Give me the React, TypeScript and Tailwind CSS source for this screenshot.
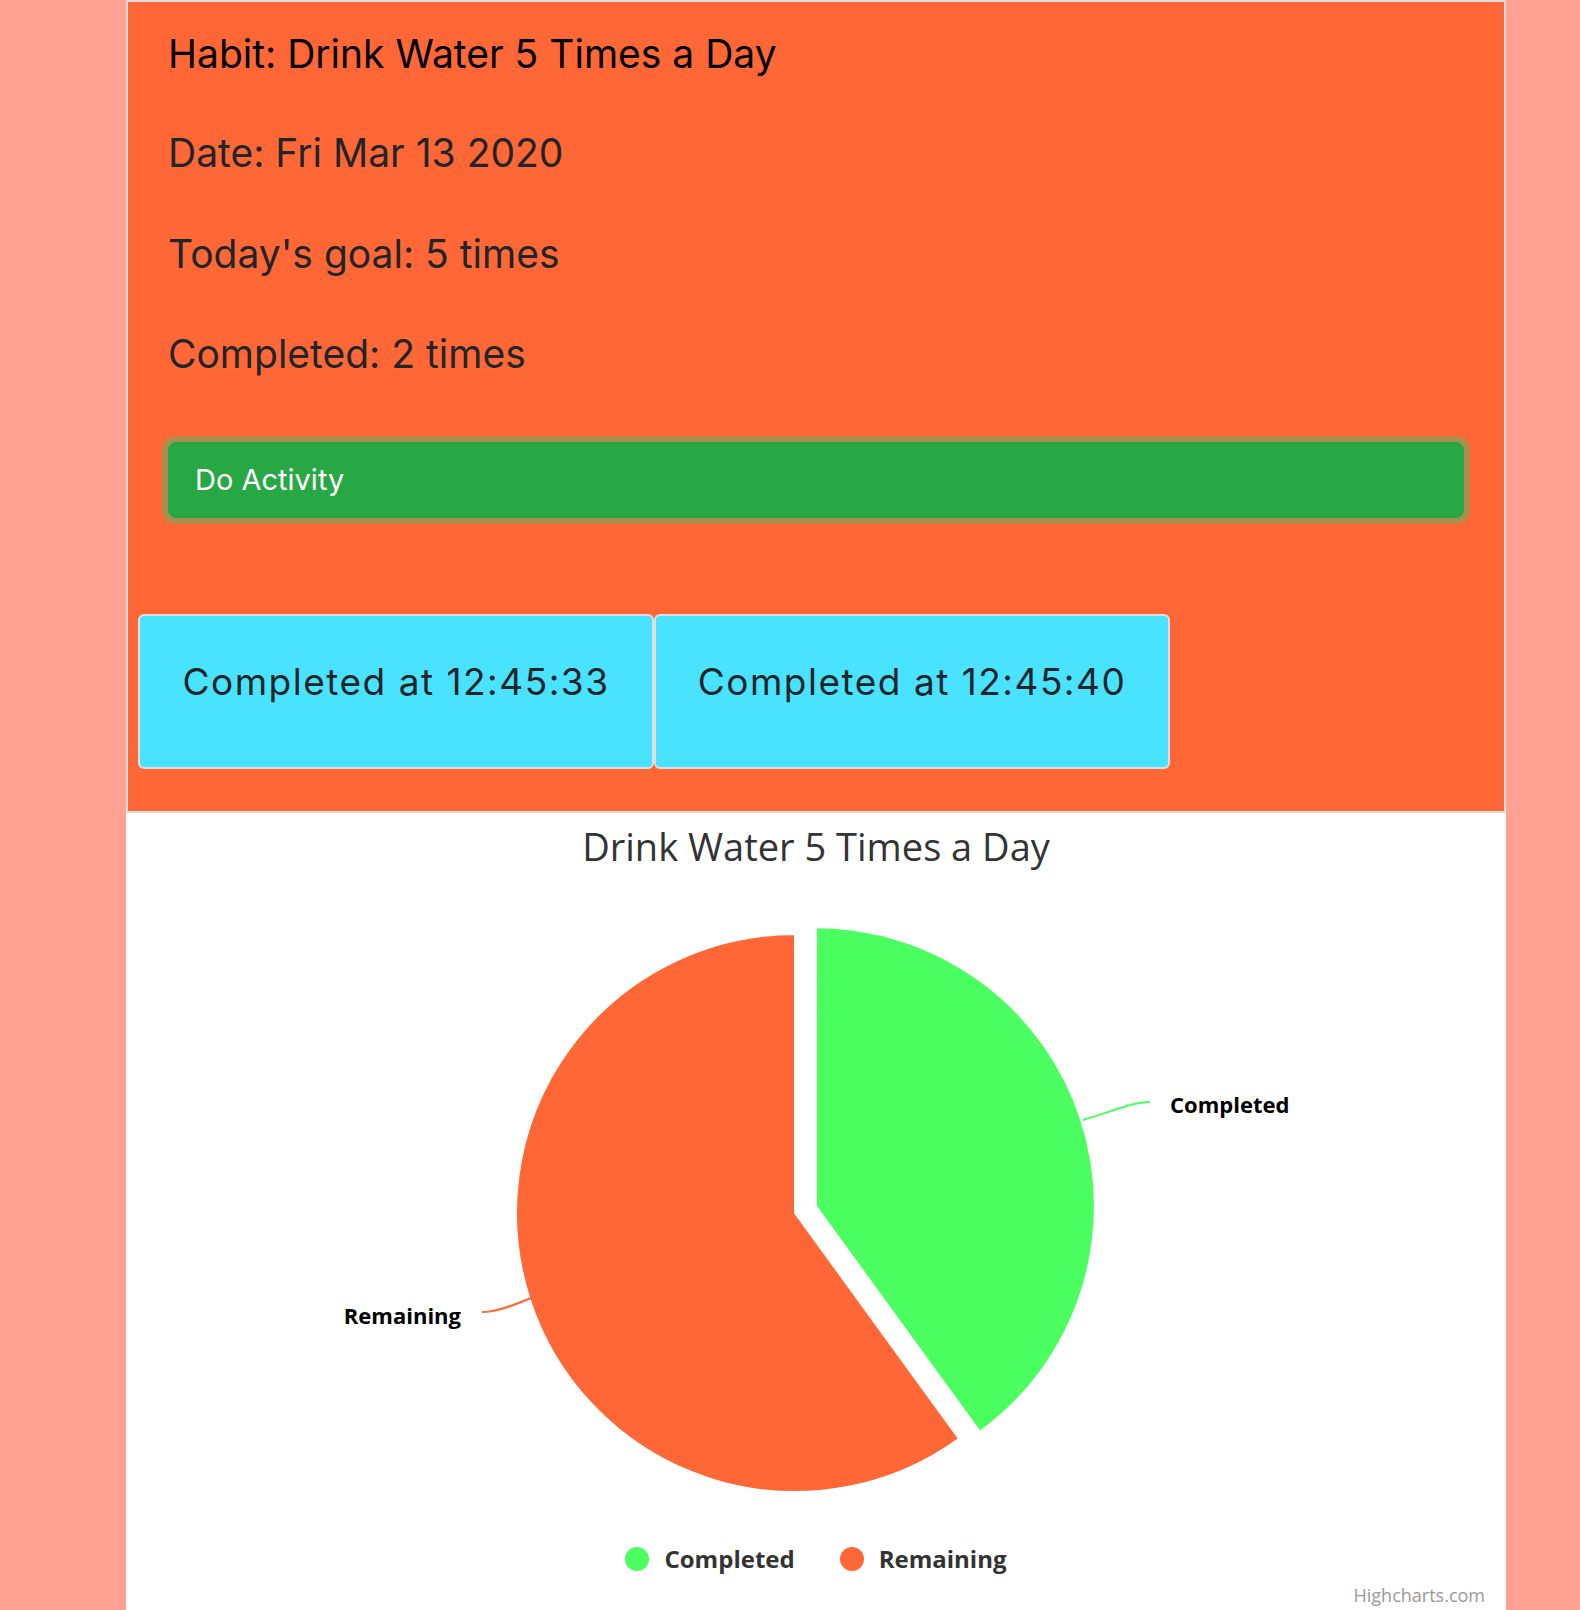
import React from "react";

const completions = ["12:45:33", "12:45:40"];

const PieChart: React.FC = () => {
  // center and radius in svg coords
  const cx = 669;
  const cy = 345;
  const r = 279;
  const endAngle = (144 * Math.PI) / 180;
  const ex = cx + r * Math.sin(endAngle);
  const ey = cy - r * Math.cos(endAngle);

  return (
    <svg width="1380" height="650" viewBox="0 0 1380 650" className="block">
      <path
        d={`M ${cx} ${cy} L ${ex} ${ey} A ${r} ${r} 0 1 1 ${cx} ${cy - r} Z`}
        fill="#ff6836"
        stroke="#ffffff"
        strokeWidth="2"
        strokeLinejoin="round"
      />
      <g transform="translate(20.9 -6.8)">
        <path
          d={`M ${cx} ${cy} L ${cx} ${cy - r} A ${r} ${r} 0 0 1 ${ex} ${ey} Z`}
          fill="#4bff60"
          stroke="#ffffff"
          strokeWidth="2"
          strokeLinejoin="round"
        />
      </g>
      <path d="M 957 252 C 990 242, 1008 234, 1024 234" fill="none" stroke="#4bff60" strokeWidth="2" />
      <text x="1044" y="245" fontFamily="'Open Sans', sans-serif" fontWeight="700" fontSize="22" fill="#000000">
        Completed
      </text>
      <path d="M 405 430 C 386 438, 370 444, 356 444" fill="none" stroke="#ff6836" strokeWidth="2" />
      <text x="335" y="456" textAnchor="end" fontFamily="'Open Sans', sans-serif" fontWeight="700" fontSize="22" fill="#000000">
        Remaining
      </text>
    </svg>
  );
};

export default function App() {
  return (
    <div className="min-h-[1610px] bg-[#ffa293] pl-[126px]">
      <div className="w-[1380px]">
        {/* habit card */}
        <div className="border-2 border-[#dedede] bg-[#ff6836] pb-[42px]" style={{ fontFamily: "Inter, 'Liberation Sans', sans-serif" }}>
          <div className="px-[40px] pt-[29px]">
            <p className="text-[39px] leading-[46px] text-black mb-[53px]">Habit: Drink Water 5 Times a Day</p>
            <p className="text-[39px] leading-[46px] text-[#212529] mb-[55px]">Date: Fri Mar 13 2020</p>
            <p className="text-[39px] leading-[46px] text-[#212529] mb-[54px]">Today's goal: 5 times</p>
            <p className="text-[39px] leading-[46px] text-[#212529]">Completed: 2 times</p>

            <button className="mt-[65px] flex h-[76px] w-full items-center rounded-[8px] bg-[#28a745] pl-[27px] text-left text-[29px] text-white shadow-[0_0_0_6px_#ad8e4d]">
              Do Activity
            </button>
          </div>

          <div className="mt-[96px] flex px-[10px]">
            {completions.map((t) => (
              <div
                key={t}
                className="h-[155px] w-[516px] rounded-[6px] border-2 border-[#dedede] bg-[#4ae3ff] pt-[44px] text-center text-[37px] leading-[43px] tracking-[1.5px] text-[#212529]"
              >
                Completed at {t}
              </div>
            ))}
          </div>
        </div>

        {/* chart */}
        <div className="h-[800px] bg-white" style={{ fontFamily: "'Open Sans', sans-serif" }}>
          <div className="h-[55px] pt-[11px] text-center text-[38px] leading-[44px] text-[#333333]">
            Drink Water 5 Times a Day
          </div>
          <PieChart />
          <div className="mt-[26px] flex items-center justify-center gap-[45px] text-[24px] font-bold leading-[30px] text-[#333333]">
            <div className="flex items-center gap-[15px]">
              <span className="h-[24px] w-[24px] rounded-full bg-[#4bff60]" />
              <span>Completed</span>
            </div>
            <div className="flex items-center gap-[15px]">
              <span className="h-[24px] w-[24px] rounded-full bg-[#ff6836]" />
              <span>Remaining</span>
            </div>
          </div>
          <div className="mt-[11px] pr-[21px] text-right text-[18px] leading-[20px] text-[#999999]">Highcharts.com</div>
        </div>
      </div>
    </div>
  );
}
